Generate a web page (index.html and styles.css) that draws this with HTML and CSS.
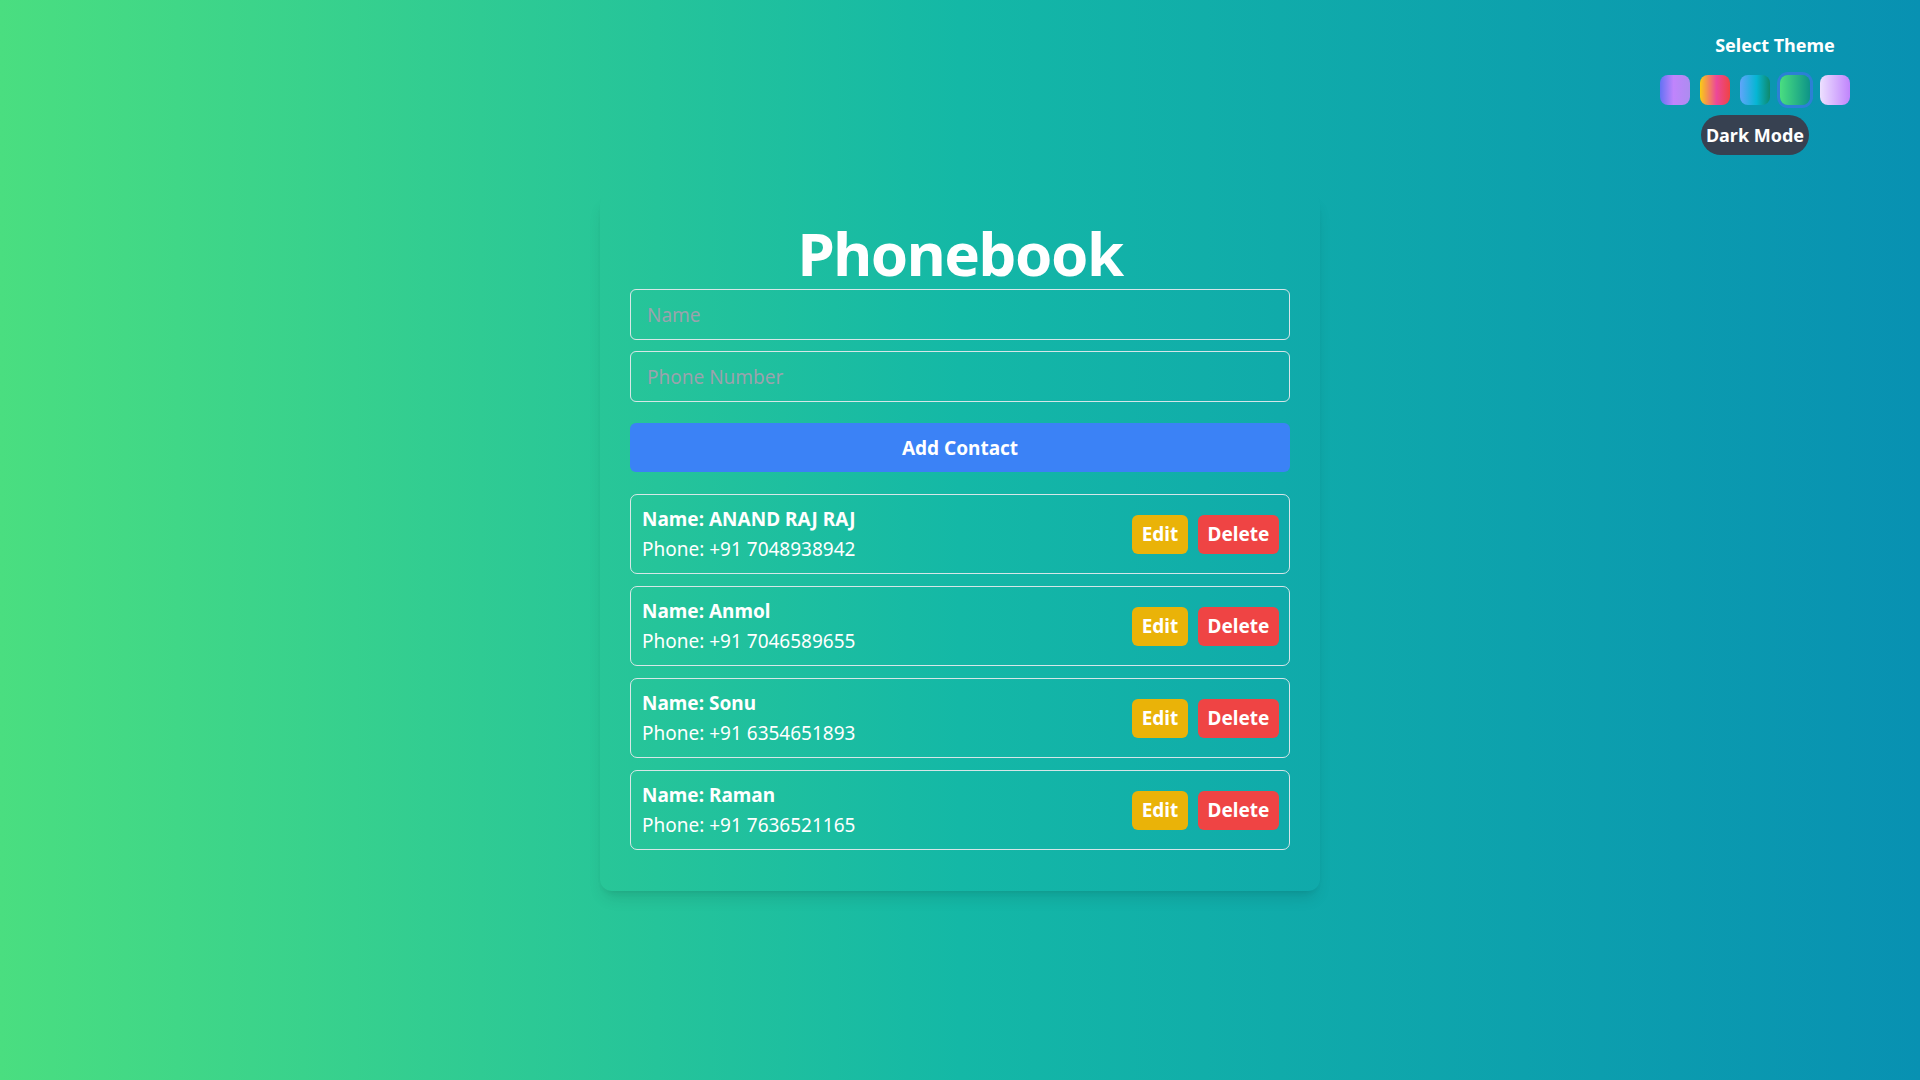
FILE: index.html
```html
<!DOCTYPE html>
<html lang="en">
<head>
<meta charset="UTF-8">
<title>Phonebook</title>
<link rel="stylesheet" href="styles.css">
</head>
<body>
  <div class="theme-panel">
    <div class="theme-title">Select Theme</div>
    <div class="swatches">
      <button class="swatch sw-1" aria-label="Purple theme"></button>
      <button class="swatch sw-2" aria-label="Sunset theme"></button>
      <button class="swatch sw-3" aria-label="Ocean theme"></button>
      <button class="swatch sw-4 active" aria-label="Green theme"></button>
      <button class="swatch sw-5" aria-label="Lavender theme"></button>
    </div>
    <button class="dark-btn">Dark Mode</button>
  </div>

  <main class="page">
    <section class="card">
      <h1 class="title">Phonebook</h1>
      <input class="field" type="text" placeholder="Name">
      <input class="field" type="text" placeholder="Phone Number">
      <button class="add-btn">Add Contact</button>

      <ul class="contacts">
        <li class="contact">
          <div class="info">
            <div class="c-name">Name: ANAND RAJ RAJ</div>
            <div class="c-phone">Phone: +91 7048938942</div>
          </div>
          <div class="actions">
            <button class="btn edit">Edit</button>
            <button class="btn delete">Delete</button>
          </div>
        </li>
        <li class="contact">
          <div class="info">
            <div class="c-name">Name: Anmol</div>
            <div class="c-phone">Phone: +91 7046589655</div>
          </div>
          <div class="actions">
            <button class="btn edit">Edit</button>
            <button class="btn delete">Delete</button>
          </div>
        </li>
        <li class="contact">
          <div class="info">
            <div class="c-name">Name: Sonu</div>
            <div class="c-phone">Phone: +91 6354651893</div>
          </div>
          <div class="actions">
            <button class="btn edit">Edit</button>
            <button class="btn delete">Delete</button>
          </div>
        </li>
        <li class="contact">
          <div class="info">
            <div class="c-name">Name: Raman</div>
            <div class="c-phone">Phone: +91 7636521165</div>
          </div>
          <div class="actions">
            <button class="btn edit">Edit</button>
            <button class="btn delete">Delete</button>
          </div>
        </li>
      </ul>
    </section>
  </main>
</body>
</html>
```
FILE: styles.css
```css
* { box-sizing: border-box; }

html, body {
  margin: 0;
  padding: 0;
  height: 100%;
}

body {
  font-family: "Noto Sans", "Open Sans", "DejaVu Sans", sans-serif;
  color: #ffffff;
  background: linear-gradient(to right, #4ade80, #14b8a6 50%, #0891b2);
  min-height: 1080px;
  position: relative;
}

button {
  font-family: inherit;
  border: none;
  cursor: pointer;
}

/* Theme panel */
.theme-panel {
  position: absolute;
  top: 31px;
  right: 70px;
  width: 190px;
  display: flex;
  flex-direction: column;
  align-items: center;
}

.theme-title {
  font-size: 18px;
  font-weight: 700;
  line-height: 28px;
  padding-left: 40px;
}

.swatches {
  display: flex;
  gap: 10px;
  margin-top: 16px;
}

.swatch {
  width: 30px;
  height: 30px;
  border-radius: 8px;
  padding: 0;
}

.sw-1 { background: linear-gradient(to right, #6372f4, #c084fc 45%, #ad8cf0); }
.sw-2 { background: linear-gradient(to right, #facc15, #ec4899 55%, #ef4444); }
.sw-3 { background: linear-gradient(to right, #60a5fa, #06b6d4 55%, #0f8a6c); }
.sw-4 { background: linear-gradient(to right, #4ade80, #0d9488); }
.sw-5 { background: linear-gradient(to right, #ede0ff, #c084fc); }

.swatch.active {
  box-shadow: 0 0 0 3px rgba(50, 125, 220, 0.85);
}

.dark-btn {
  margin-top: 10px;
  height: 40px;
  padding: 0 5px;
  border-radius: 20px;
  background: #374151;
  color: #ffffff;
  font-size: 18px;
  font-weight: 700;
}

/* Main card */
.page {
  display: flex;
  justify-content: center;
  padding-top: 194px;
}

.card {
  width: 720px;
  padding: 29px 30px 29px;
  border-radius: 12px;
  box-shadow: 0 10px 15px -3px rgba(0, 0, 0, 0.1), 0 4px 6px -4px rgba(0, 0, 0, 0.1);
  display: flex;
  flex-direction: column;
}

.title {
  margin: 0 0 6px;
  font-size: 60px;
  line-height: 60px;
  font-weight: 700;
  text-align: center;
  letter-spacing: -1.5px;
}

.field {
  width: 100%;
  height: 51px;
  padding: 0 16px;
  background: transparent;
  border: 1px solid rgba(235, 235, 240, 0.9);
  border-radius: 6px;
  font-family: inherit;
  font-size: 19px;
  color: #ffffff;
  outline: none;
}

.field + .field { margin-top: 11px; }

.field::placeholder {
  color: #9aa3ad;
}

.add-btn {
  margin-top: 21px;
  height: 49px;
  width: 100%;
  background: #3b82f6;
  color: #ffffff;
  border-radius: 6px;
  font-size: 19px;
  font-weight: 700;
}

.contacts {
  list-style: none;
  margin: 22px 0 0;
  padding: 0;
}

.contact {
  height: 80px;
  margin-bottom: 12px;
  border: 1px solid rgba(235, 235, 240, 0.9);
  border-radius: 7px;
  padding: 0 10px 0 11px;
  display: flex;
  align-items: center;
  justify-content: space-between;
}

.info {
  font-size: 19px;
  line-height: 30px;
}

.c-name { font-weight: 700; }
.c-phone { font-weight: 400; }

.actions {
  display: flex;
  gap: 10px;
}

.btn {
  height: 39px;
  border-radius: 6px;
  color: #ffffff;
  font-size: 19px;
  font-weight: 700;
  padding: 0;
}

.edit { width: 56px; background: #eab308; }
.delete { width: 81px; background: #ef4444; }
```
